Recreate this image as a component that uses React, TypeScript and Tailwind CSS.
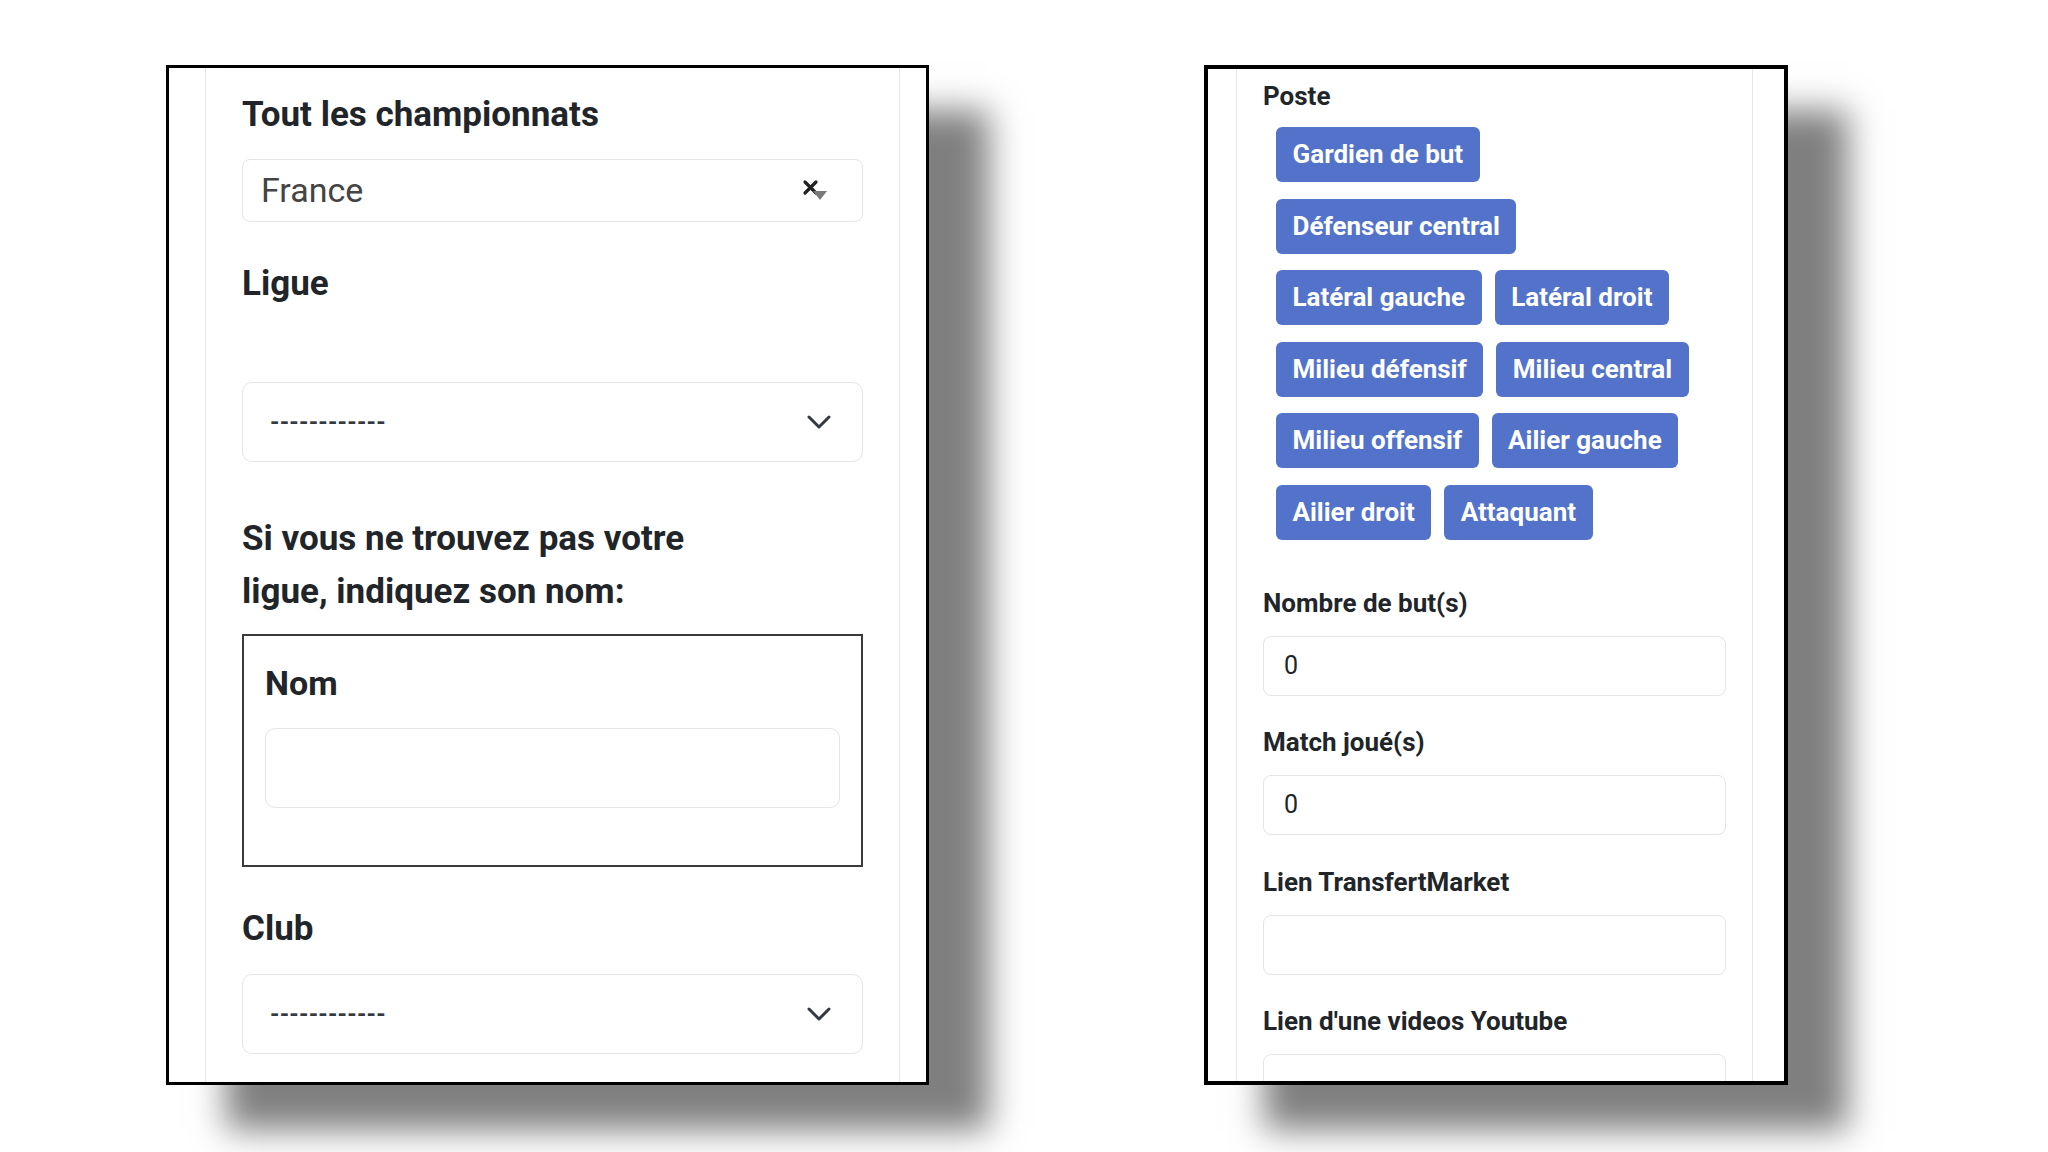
const postes: string[][] = [
  ["Gardien de but"],
  ["Défenseur central"],
  ["Latéral gauche", "Latéral droit"],
  ["Milieu défensif", "Milieu central"],
  ["Milieu offensif", "Ailier gauche"],
  ["Ailier droit", "Attaquant"],
];

const Chevron = () => (
  <svg width="24" height="14" viewBox="0 0 24 14" fill="none">
    <path d="M2 2 L12 12 L22 2" stroke="#343a40" strokeWidth="3" strokeLinecap="round" strokeLinejoin="round" />
  </svg>
);

const ClearCaret = () => (
  <svg width="28" height="24" viewBox="0 0 28 24" fill="none">
    <path d="M3 3 L14 14 M14 3 L3 14" stroke="#222" strokeWidth="3.2" strokeLinecap="round" />
    <path d="M11 12 L25 12 L18 21 Z" fill="#7a7a7a" />
  </svg>
);

const Dashes = () => (
  <span className="text-[24px] font-bold tracking-[0.2px] text-[#343a40] leading-none">------------</span>
);

const SelectBox = () => (
  <div className="flex h-[80px] items-center justify-between rounded-[10px] border border-[#e3e5e8] pl-[27px] pr-[31px]">
    <Dashes />
    <Chevron />
  </div>
);

const LeftPanel = () => (
  <div className="h-[1020px] w-[763px] shrink-0 overflow-hidden border-[3px] border-black bg-white shadow-[60px_45px_32px_rgba(0,0,0,0.5)]">
    <div className="ml-[36px] h-full w-[695px] border-x border-[#e6e9ec] px-[36px] pt-[26px] text-[#212529]">
      <h2 className="text-[35px] font-bold leading-[42px]">Tout les championnats</h2>
      <div className="mt-[23px] flex h-[63px] items-center justify-between rounded-[8px] border border-[#e3e5e8] pl-[18px] pr-[32px]">
        <span className="text-[34px] text-[#444]">France</span>
        <ClearCaret />
      </div>
      <h2 className="mt-[41px] text-[35px] font-bold leading-[42px]">Ligue</h2>
      <div className="mt-[77px]">
        <SelectBox />
      </div>
      <p className="mt-[50px] w-[460px] text-[35px] font-bold leading-[53px]">
        Si vous ne trouvez pas votre ligue, indiquez son nom:
      </p>
      <div className="mt-[16px] h-[233px] border-2 border-[#3a3a3a] px-[21px] pt-[27px]">
        <h3 className="text-[34px] font-bold leading-[40px]">Nom</h3>
        <div className="mt-[25px] h-[80px] rounded-[10px] border border-[#e3e5e8]" />
      </div>
      <h2 className="mt-[41px] text-[35px] font-bold leading-[42px]">Club</h2>
      <div className="mt-[24px]">
        <SelectBox />
      </div>
    </div>
  </div>
);

const Field = ({ label, value, first }: { label: string; value?: string; first?: boolean }) => (
  <div className={first ? "mt-[48px]" : "mt-[31.5px]"}>
    <label className="block text-[26px] font-bold leading-[31px]">{label}</label>
    <div className="mt-[17px] flex h-[60px] items-center rounded-[8px] border border-[#e3e5e8] px-[20px] text-[25px] text-[#212529]">
      {value}
    </div>
  </div>
);

const RightPanel = () => (
  <div className="h-[1020px] w-[584px] shrink-0 overflow-hidden border-4 border-black bg-white shadow-[60px_45px_32px_rgba(0,0,0,0.5)]">
    <div className="ml-[28px] h-full w-[517px] border-x border-[#e6e9ec] px-[26px] pt-[12px] text-[#212529]">
      <h2 className="text-[26px] font-bold leading-[31px]">Poste</h2>
      <div className="mt-[15px] flex flex-col gap-[16.5px] pl-[13px]">
        {postes.map((row, i) => (
          <div key={i} className="flex gap-[13px]">
            {row.map((p) => (
              <button
                key={p}
                type="button"
                className="flex h-[55px] items-center rounded-[6px] bg-[#5373cb] px-[16.5px] text-[26px] font-bold text-white"
              >
                {p}
              </button>
            ))}
          </div>
        ))}
      </div>
      <Field label="Nombre de but(s)" value="0" first />
      <Field label="Match joué(s)" value="0" />
      <Field label="Lien TransfertMarket" />
      <Field label="Lien d'une videos Youtube" />
    </div>
  </div>
);

export default function App() {
  return (
    <div className="flex h-[1152px] w-[2048px] gap-[275px] bg-white pl-[166px] pt-[65px] font-['Roboto','Liberation_Sans',sans-serif]">
      <LeftPanel />
      <RightPanel />
    </div>
  );
}
